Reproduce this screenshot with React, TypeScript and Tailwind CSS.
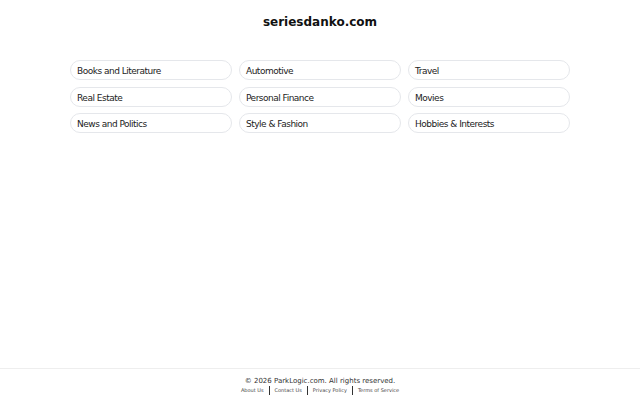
import React from "react";

const cats = [
  "Books and Literature",
  "Automotive",
  "Travel",
  "Real Estate",
  "Personal Finance",
  "Movies",
  "News and Politics",
  "Style & Fashion",
  "Hobbies & Interests",
];

const links = ["About Us", "Contact Us", "Privacy Policy", "Terms of Service"];

export default function App() {
  return (
    <div
      className="flex min-h-[400px] flex-col bg-white text-[#111827]"
      style={{ fontFamily: '"DejaVu Sans", sans-serif' }}
    >
      <main className="flex-1">
        <h1 className="pt-[14px] text-center text-[12px] font-bold leading-[17px] text-[#111]">
          seriesdanko.com
        </h1>
        <div className="mx-auto mt-[29px] grid w-[500px] grid-cols-3 gap-x-[7px] gap-y-[6.5px]">
          {cats.map((c) => (
            <a
              key={c}
              className="flex h-[20px] items-center rounded-full border border-[#e5e7eb] px-[6px] pt-[2px] text-[9px] leading-[10px] tracking-[-0.5px] text-[#222]"
            >
              {c}
            </a>
          ))}
        </div>
      </main>
      <footer className="border-t border-[#eeeeee] pt-[7px] pb-[5px] text-center">
        <div className="text-[7px] leading-[10px] text-[#333]">
          © 2026 ParkLogic.com. All rights reserved.
        </div>
        <div className="flex items-center justify-center text-[5px] leading-[9px] text-[#444]">
          {links.map((l, i) => (
            <React.Fragment key={l}>
              {i > 0 && <span className="mx-[5px] h-[9px] w-px bg-[#333]" />}
              <span>{l}</span>
            </React.Fragment>
          ))}
        </div>
      </footer>
    </div>
  );
}
